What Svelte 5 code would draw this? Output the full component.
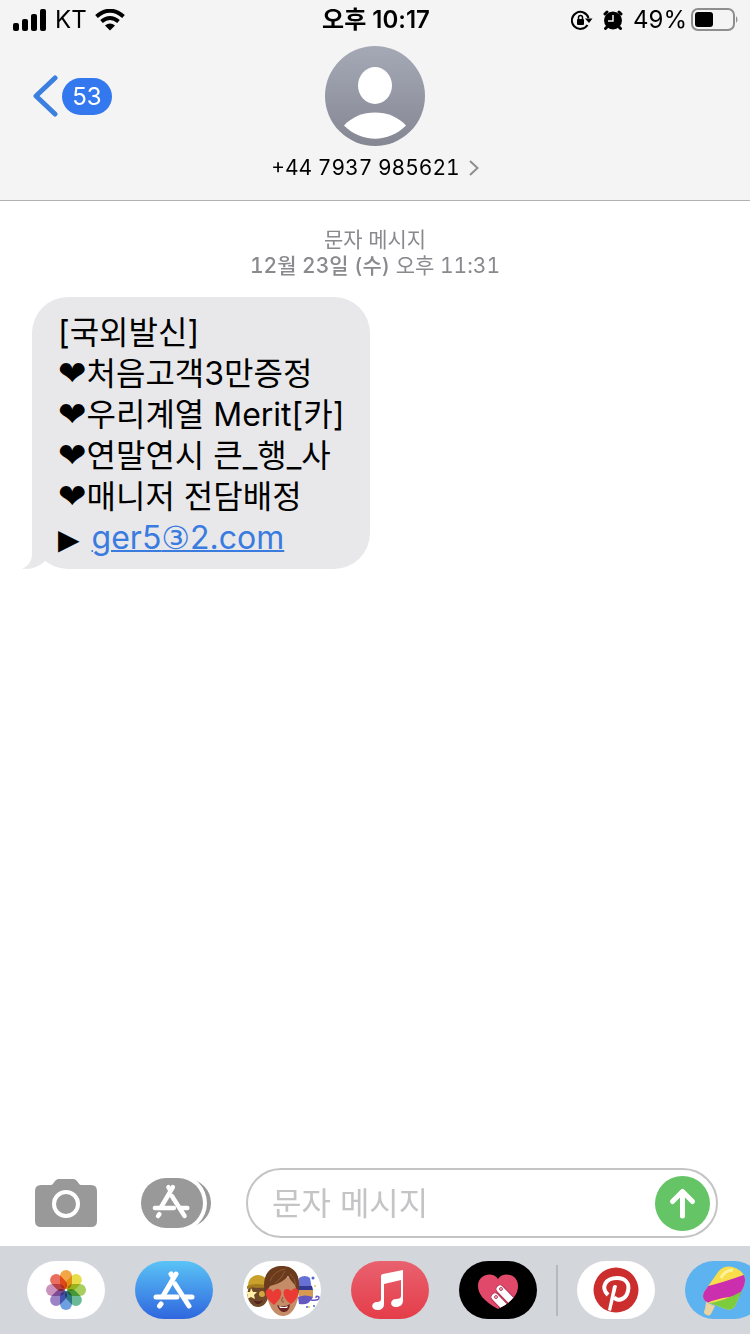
<script lang="ts">
  let draft = $state("");

  const carrier = "KT";
  const unread = 53;
  const battery = 49;
  const contact = "+44 7937 985621";

  const lines = ["처음고객3만증정", "우리계열 Merit[카]", "연말연시 큰_행_사", "매니저 전담배정"];

  const petals = [
    { angle: 0, color: "#f39a2c" },
    { angle: 45, color: "#e6d832" },
    { angle: 90, color: "#9bc84a" },
    { angle: 135, color: "#55b08a" },
    { angle: 180, color: "#5a93dc" },
    { angle: 225, color: "#8d72bd" },
    { angle: 270, color: "#c184b5" },
    { angle: 315, color: "#e65a48" },
  ];
</script>

{#snippet appStoreGlyph()}
  <g fill="none" stroke="#fff" stroke-width="5" stroke-linecap="round">
    <path d="M41 13 L28 35" />
    <path d="M36 13 L38 16" />
    <path d="M40 23 L54 45" />
    <path d="M21 36 H42 M50 36 H57" />
    <path d="M26 43 L24.500 45" />
  </g>
{/snippet}

<div class="screen">
  <header>
    <div class="status">
      <div class="status-left">
        <svg width="34" height="22" viewBox="0 0 34 22" aria-hidden="true">
          <rect x="0" y="14" width="6" height="8" rx="2" />
          <rect x="9" y="10" width="6" height="12" rx="2" />
          <rect x="18" y="5" width="6" height="17" rx="2" />
          <rect x="27" y="0" width="6" height="22" rx="2" />
        </svg>
        <span>{carrier}</span>
        <svg width="30" height="22" viewBox="0 0 30 22" aria-hidden="true">
          <g fill="none" stroke="#000" stroke-width="4">
            <path d="M1.500 7.500 Q15 -4 28.500 7.500" />
            <path d="M6.500 12.500 Q15 5.500 23.500 12.500" />
          </g>
          <path d="M10 16.500 Q15 12.500 20 16.500 L15 21.500 Z" />
        </svg>
      </div>
      <time class="clock">오후 10:17</time>
      <div class="status-right">
        <svg class="lock" width="22" height="20" viewBox="0 0 22 20" aria-hidden="true">
          <path d="M16.500 15 A8.500 8.500 0 1 1 17.500 8" fill="none" stroke="#000" stroke-width="2" />
          <path d="M14 8.500 H21.500 L18 13 Z" />
          <rect x="6" y="9" width="7" height="6" rx="1" />
          <path d="M7.500 9 V7.500 A2 2 0 0 1 11.500 7.500 V9" fill="none" stroke="#000" stroke-width="1.500" />
        </svg>
        <svg class="alarm" width="20" height="20" viewBox="0 0 20 20" aria-hidden="true">
          <circle cx="10" cy="10.500" r="9" />
          <path d="M2 4 L4 2 M18 4 L16 2 M2.500 18.500 L4.500 16.500 M17.500 18.500 L15.500 16.500" stroke="#000" stroke-width="3" stroke-linecap="round" />
          <path d="M10 5 V11 H5" fill="none" stroke="#f4f4f4" stroke-width="1.500" />
        </svg>
        <span>{battery}%</span>
        <svg width="48" height="24" viewBox="0 0 48 24" aria-hidden="true">
          <rect x="1" y="1" width="42" height="21" rx="6" fill="none" stroke="#8e8e8e" stroke-width="2" />
          <rect x="4" y="4" width="18" height="15" rx="3" />
          <path d="M45 8 Q48 11.500 45 15 Z" fill="#8e8e8e" />
        </svg>
      </div>
    </div>

    <div class="nav">
      <button class="back" aria-label="뒤로">
        <svg width="26" height="44" viewBox="0 0 26 44" aria-hidden="true">
          <path d="M23 4 L4 22 L23 40" fill="none" stroke="#3b80e0" stroke-width="5" stroke-linecap="round" stroke-linejoin="round" />
        </svg>
        <span class="badge">{unread}</span>
      </button>
      <button class="contact">
        <svg width="100" height="100" viewBox="0 0 100 100" aria-hidden="true">
          <defs>
            <linearGradient id="avatar" x2="0" y2="1">
              <stop offset="0" stop-color="#a5a9b6" />
              <stop offset="1" stop-color="#858793" />
            </linearGradient>
          </defs>
          <circle cx="50" cy="50" r="50" fill="url(#avatar)" />
          <ellipse cx="50" cy="39.500" rx="17" ry="18.500" fill="#fff" />
          <path d="M19 79.500 C34 62 66 62 81 79.500 C64 97 36 97 19 79.500 Z" fill="#fff" />
        </svg>
        <span class="name">
          {contact}
          <svg width="10" height="16" viewBox="0 0 10 16" aria-hidden="true">
            <path d="M1 1 L8.500 8 L1 15" fill="none" stroke="#8e8e92" stroke-width="2" />
          </svg>
        </span>
      </button>
    </div>
  </header>

  <main>
    <p class="stamp">문자 메시지<br /><b>12월 23일 (수)</b> 오후 11:31</p>
    <div class="bubble">
      <p>[국외발신]</p>
      {#each lines as line}
        <p><span class="symbol heart">❤</span>{line}</p>
      {/each}
      <p><span class="symbol arrow">▶</span> <a href="#link">ger5<span class="symbol">③</span>2.com</a></p>
      <svg class="tail" width="34" height="34" viewBox="0 0 34 34" aria-hidden="true">
        <path d="M10 0 V18 C10 26 7 31 0 33.500 C10 35 18 31 23 26 L34 10 Z" fill="#e8e8ea" />
      </svg>
    </div>
  </main>

  <form class="composer" onsubmit={(e) => e.preventDefault()}>
    <button type="button" aria-label="카메라">
      <svg width="62" height="48" viewBox="0 0 62 48" aria-hidden="true">
        <path d="M6 6 H16 C19 6 19 0 24 0 H38 C43 0 43 6 46 6 H56 Q62 6 62 12 V42 Q62 48 56 48 H6 Q0 48 0 42 V12 Q0 6 6 6 Z" fill="#999" />
        <circle cx="31" cy="25" r="12" fill="none" stroke="#fff" stroke-width="4" />
      </svg>
    </button>
    <button type="button" class="apps" aria-label="앱">
      <svg width="70" height="50" viewBox="0 0 70 50" aria-hidden="true">
        <rect x="16" y="1" width="54" height="48" rx="24" fill="#999" />
        <rect x="-4" y="-4" width="70" height="58" rx="29" fill="#fff" />
        <rect width="62" height="50" rx="25" fill="#999" />
        <g transform="translate(-5 -2.500) scale(.9)">{@render appStoreGlyph()}</g>
      </svg>
    </button>
    <div class="field">
      <input type="text" placeholder="문자 메시지" aria-label="문자 메시지" bind:value={draft} />
      <button class="send" aria-label="보내기">
        <svg width="55" height="55" viewBox="0 0 55 55" aria-hidden="true">
          <circle cx="27.500" cy="27.500" r="27.500" fill="#65c466" />
          <path d="M27.500 40 V16 M17.500 25.500 L27.500 15.500 L37.500 25.500" fill="none" stroke="#fff" stroke-width="5" stroke-linecap="round" stroke-linejoin="round" />
        </svg>
      </button>
    </div>
  </form>

  <nav class="dock" aria-label="앱">
    <div class="group">
      <button class="app" aria-label="사진">
        <svg viewBox="0 0 78 58" aria-hidden="true">
          <rect width="78" height="58" fill="#fff" />
          <g class="petals">
            {#each petals as petal}
              <rect x="33" y="9" width="12" height="19" rx="6" fill={petal.color} fill-opacity=".88" transform="rotate({petal.angle} 39 29)" />
            {/each}
          </g>
        </svg>
      </button>
      <button class="app" aria-label="앱 스토어">
        <svg viewBox="0 0 78 58" aria-hidden="true">
          <defs>
            <linearGradient id="store" x2="0" y2="1">
              <stop offset="0" stop-color="#5ac3f6" />
              <stop offset="1" stop-color="#2f66de" />
            </linearGradient>
          </defs>
          <rect width="78" height="58" fill="url(#store)" />
          {@render appStoreGlyph()}
        </svg>
      </button>
      <button class="app" aria-label="미모티콘">
        <svg viewBox="0 0 78 58" aria-hidden="true">
          <rect width="78" height="58" fill="#fff" />
          <!-- star-eyed builder -->
          <ellipse cx="15" cy="33" rx="10.500" ry="13" fill="#6e4827" />
          <path d="M5 25 C5 11 24 10 26 25 Q15 28 5 25 Z" fill="#c9a02c" />
          <path d="M4 25 Q14 21 26 25 V28 Q14 24 4 28 Z" fill="#a57c1f" />
          <path d="M8 27 L10 31 L14 31 L11 34 L12 38 L8 36 L4 38 L5 34 L3 31 L7 31 Z" fill="#fff0a8" />
          <circle cx="19" cy="33" r="3" fill="#d1a840" />
          <path d="M10 39 Q15 42 20 39 Q15 47 10 39 Z" fill="#521f20" />
          <!-- wizard -->
          <path d="M56 17 Q62 13 67 17 L69 29 H55 Z" fill="#6770d4" />
          <path d="M56 25 H69 L70 29 H56 Z" fill="#343a91" />
          <path d="M56 29 H70 V36 H56 Z" fill="#d79a52" />
          <path d="M55 36 Q62 33 70 36 Q66 45 56 43 Z" fill="#6557c0" />
          <path d="M68 39 Q77 40 76 36 Q73 34 73 37" fill="none" stroke="#6557c0" stroke-width="1.500" />
          <g fill="#4e65cf">
            <circle cx="70" cy="17" r="1.500" />
            <circle cx="71" cy="45" r="1" />
            <circle cx="64" cy="46" r="1" />
          </g>
          <circle cx="72" cy="25" r="1" fill="#edc15d" />
          <circle cx="66" cy="46" r="1" fill="#edc15d" />
          <!-- heart-eyed face -->
          <path d="M23 26 C24 12 55 12 56 26 C56 40 51 55 40 55 C30 55 24 43 23 26 Z" fill="#c58c68" />
          <path d="M22 34 C18 13 27 5 39 5 C53 5 59 16 55 34 L52 24 Q48 20 45 15 Q40 22 27 25 Q24 29 22 34 Z" fill="#6b3b1e" />
          <path d="M27 20 Q31 10 42 8 M32 22 Q39 18 42 10 M47 13 Q52 17 53 24" fill="none" stroke="#8f5932" />
          <path d="M31 44 C21 36 21 28 26 28 Q29 28 30 31 Q34 25 38 30 Q40 36 31 44 Z" fill="#e93b34" />
          <path d="M48 43 C39 37 39 28 44 28 Q47 28 48 30 Q52 25 55 29 Q57 36 48 43 Z" fill="#e93b34" />
          <path d="M40 36 Q37 41 41 41" fill="none" stroke="#8b5036" />
          <path d="M34 44 Q41 47 47 43 Q46 52 40 51 Q36 50 34 44 Z" fill="#6b2523" />
          <path d="M36 45 Q41 47 45 45 L44 47 H37 Z" fill="#fff" />
        </svg>
      </button>
      <button class="app" aria-label="음악">
        <svg viewBox="0 0 78 58" aria-hidden="true">
          <defs>
            <linearGradient id="music" x2="0" y2="1">
              <stop offset="0" stop-color="#e9616f" />
              <stop offset="1" stop-color="#e43d49" />
            </linearGradient>
          </defs>
          <rect width="78" height="58" fill="url(#music)" />
          <path d="M30 15 Q30 13 32 13 L52 9 V39 C52 44 49 46 45 46 C38 46 39 38 45 38 Q50 38 50 35 V19 L33 23 V43 C33 47 30 49 27 49 C19 49 20 41 26 41 Q30 41 30 38 Z" fill="#fff" />
        </svg>
      </button>
      <button class="app" aria-label="디지털 터치">
        <svg viewBox="0 0 78 58" aria-hidden="true">
          <rect width="78" height="58" />
          <clipPath id="heart">
            <path d="M39 48 C24 40 19 32 19 25 C19 13 34 10 39 18 C44 10 59 13 59 25 C59 33 54 40 39 48 Z" />
          </clipPath>
          <g clip-path="url(#heart)">
            <rect width="78" height="58" fill="#e1496b" />
            <g fill="#fff" stroke="#b62d4e" stroke-width="1">
              <rect x="37" y="24" width="24" height="8" rx="4" transform="rotate(46 41 28)" />
              <rect x="32" y="32" width="24" height="8" rx="4" transform="rotate(46 36 36)" />
            </g>
          </g>
          <g fill="#f4b5c0" stroke="#b84a60">
            <circle cx="42" cy="28" r="1.500" />
            <circle cx="37" cy="36" r="1.500" />
          </g>
        </svg>
      </button>
    </div>
    <div class="divider"></div>
    <div class="group">
      <button class="app" aria-label="핀터레스트">
        <svg viewBox="0 0 78 58" aria-hidden="true">
          <rect width="78" height="58" fill="#fff" />
          <circle cx="39" cy="29" r="22.500" fill="#cb2e2c" />
          <path d="M31 34 C23 26 29 17 40 17 C48 17 53 22 51 30 C49 39 40 41 37 36" fill="none" stroke="#fff" stroke-width="4" />
          <path d="M36 25 Q38 23 40 25 L34 50 L31 49 Z" fill="#fff" />
        </svg>
      </button>
      <button class="app" aria-label="아이스크림">
        <svg viewBox="0 0 78 58" aria-hidden="true">
          <rect width="78" height="58" fill="#5db2f0" />
          <path d="M21 41 L30 45 L26 53 Q24 56 20 53 Q18 52 20 48 Z" fill="#ead3a0" />
          <clipPath id="pop">
            <path d="M31 14 C37 3 47 4 54 9 C62 14 61 22 57 29 L50 45 Q47 50 41 48 L22 41 Q16 38 19 31 Z" />
          </clipPath>
          <g clip-path="url(#pop)">
            <rect width="78" height="58" fill="#f8de4b" />
            <path d="M10 28 Q35 23 64 12 V35 Q38 34 20 43 L10 40 Z" fill="#cb2fae" />
            <path d="M20 43 Q42 40 64 26 V58 H20 Z" fill="#7dcc3d" />
            <path d="M36 17 Q40 9 48 9" fill="none" stroke="#fff29a" stroke-width="3" />
          </g>
        </svg>
      </button>
    </div>
  </nav>
</div>

<style>
  :global(body) {
    background: #fff;
  }
  .screen {
    display: flex;
    flex-direction: column;
    min-height: 100vh;
    overflow: hidden;
    color: #000;
    font-family: Inter, "Noto Sans CJK KR", sans-serif;
  }
  svg {
    display: block;
    flex: none;
  }
  p {
    margin: 0;
  }
  button {
    padding: 0;
    border: 0;
    background: none;
    color: inherit;
    font: inherit;
    cursor: pointer;
  }
  header {
    background: #f4f4f4;
    border-bottom: 1px solid #b2b2b2;
  }
  .status {
    display: grid;
    grid-template-columns: 1fr auto 1fr;
    align-items: center;
    height: 40px;
    padding: 0 11px 0 13px;
    font-size: 24px;
    line-height: 40px;
  }
  .status-left,
  .status-right {
    display: flex;
    align-items: center;
    gap: 8px;
  }
  .status-right {
    justify-content: flex-end;
    gap: 4px;
  }
  .lock,
  .alarm {
    margin-right: 6px;
  }
  .clock {
    font-weight: 600;
  }
  .nav {
    display: grid;
    grid-template-columns: 1fr auto 1fr;
    align-items: start;
    padding: 6px 32px 17px;
  }
  .back {
    display: flex;
    align-items: center;
    gap: 4px;
    justify-self: start;
    height: 100px;
  }
  .badge {
    width: 50px;
    border-radius: 19px;
    background: #3478f0;
    color: #fff;
    font-size: 24px;
    line-height: 37px;
    text-align: center;
  }
  .contact {
    display: flex;
    flex-direction: column;
    align-items: center;
    gap: 7px;
  }
  .name {
    display: flex;
    align-items: center;
    gap: 9px;
    font-size: 21px;
    font-variant-numeric: tabular-nums;
    line-height: 30px;
  }
  main {
    flex: 1;
    padding: 26px 32px;
  }
  .stamp {
    color: #8a8a8e;
    font-size: 21px;
    font-variant-numeric: tabular-nums;
    line-height: 26px;
    text-align: center;
  }
  .stamp b {
    font-weight: 500;
  }
  .bubble {
    position: relative;
    width: fit-content;
    margin-top: 18px;
    padding: 15px 26px 11px;
    border-radius: 36px;
    background: #e8e8ea;
    font-size: 32px;
    line-height: 41px;
  }
  .bubble p {
    height: 41px;
  }
  .bubble a {
    color: #3a7be0;
    text-decoration-thickness: 2px;
  }
  .symbol {
    font-family: "DejaVu Sans", sans-serif;
    line-height: 0;
  }
  .heart {
    font-size: 34px;
  }
  .arrow {
    margin-right: 3px;
    font-size: 28px;
  }
  .tail {
    position: absolute;
    bottom: 0;
    left: -10px;
  }
  .composer {
    display: flex;
    align-items: center;
    gap: 35px;
    padding: 0 32px 8px 35px;
  }
  .apps {
    margin-left: 9px;
  }
  .field {
    display: flex;
    flex: 1;
    align-items: center;
    box-sizing: border-box;
    min-width: 0;
    height: 70px;
    padding: 0 6px 0 24px;
    border: 2px solid #c4c4c6;
    border-radius: 35px;
  }
  .field input {
    flex: 1;
    min-width: 0;
    padding: 0;
    border: 0;
    outline: 0;
    background: none;
    font: inherit;
    font-size: 32px;
  }
  .field input::placeholder {
    color: #c4c4c6;
  }
  .dock {
    display: flex;
    align-items: center;
    gap: 19px;
    height: 88px;
    padding-left: 27px;
    overflow: hidden;
    background: #d3d6db;
  }
  .group {
    display: flex;
    gap: 30px;
  }
  .app {
    flex: none;
    width: 78px;
    height: 58px;
    border-radius: 29px;
    overflow: hidden;
  }
  .petals rect {
    mix-blend-mode: multiply;
  }
  .divider {
    flex: none;
    width: 2px;
    height: 51px;
    background: #b5b8bd;
  }
</style>
